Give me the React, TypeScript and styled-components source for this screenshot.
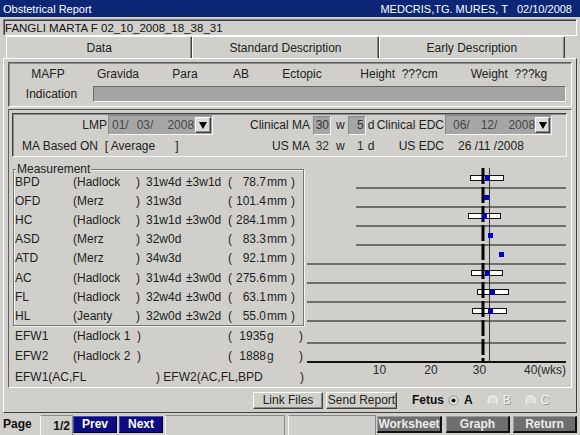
import React from 'react';
import styled, { createGlobalStyle, css } from 'styled-components';

const FACE = '#d0cfcb';

const GlobalStyle = createGlobalStyle`
  html, body {
    margin: 0;
    padding: 0;
    background: ${FACE};
  }
  body {
    font-family: "Liberation Sans", Arial, sans-serif;
    font-size: 12px;
    color: #1c1c1c;
  }
`;

const sunken = css`
  border: 1px solid;
  border-color: #6a6a6a #f4f4f4 #f4f4f4 #6a6a6a;
`;

const raised = css`
  border: 1px solid;
  border-color: #fff #404040 #404040 #fff;
  box-shadow: inset -1px -1px 0 #8a8a8a;
`;

const etched = css`
  border: 1px solid #767676;
  box-shadow: inset 1px 1px 0 #f4f4f4, 1px 1px 0 #f4f4f4;
`;

const Root = styled.div`
  width: 580px;
  height: 435px;
  overflow: hidden;
  display: flex;
  flex-direction: column;
  background: ${FACE};
`;

const TitleBar = styled.div`
  height: 17px;
  flex: none;
  display: flex;
  align-items: center;
  justify-content: space-between;
  padding: 0 8px 0 3px;
  background: #0c2676;
  color: #fff;
  font-size: 11px;
  white-space: pre;
`;

const NameBar = styled.div`
  height: 17px;
  flex: none;
  box-sizing: border-box;
  margin: 2px 3px 0;
  padding-left: 1px;
  display: flex;
  align-items: center;
  border: 1px solid;
  border-color: #808080 #fff #fff #808080;
  box-shadow: inset 1px 1px 0 #404040;
  font-size: 11.5px;
  color: #111;
`;

const TabRow = styled.div`
  height: 22px;
  flex: none;
  display: flex;
  margin: 0 15px 0 6px;
`;

const Tab = styled.div<{ $active?: boolean }>`
  flex: 1;
  box-sizing: border-box;
  display: flex;
  align-items: center;
  justify-content: center;
  padding-top: 1px;
  border-top: 1px solid #fff;
  border-left: 1px solid #fff;
  border-right: 1px solid #404040;
  box-shadow: inset -1px 0 0 #8a8a8a;
  border-radius: 2px 2px 0 0;
  color: #222;
  ${p => p.$active && css`padding-bottom: 1px;`}
`;

const MainPanel = styled.div`
  flex: 1;
  margin: 0 3px;
  box-sizing: border-box;
  display: flex;
  flex-direction: column;
  padding: 3px 4px 0;
  border: 1px solid;
  border-color: #fff #404040 #404040 #fff;
`;

const HeaderBox = styled.div`
  height: 45px;
  flex: none;
  box-sizing: border-box;
  display: flex;
  flex-direction: column;
  border: 1px solid;
  border-color: #5c5c5c #fff #fff #5c5c5c;
  box-shadow: inset 1px 1px 0 #8a8a8a;
`;

const HeaderRow = styled.div<{ $h: number }>`
  height: ${p => p.$h}px;
  display: flex;
  align-items: center;
  padding-left: 1px;
`;

const HeaderCell = styled.span<{ $w: number }>`
  width: ${p => p.$w}px;
  flex: none;
  text-align: center;
  white-space: pre;
  color: #222;
`;

const IndicationInput = styled.div`
  flex: 1;
  height: 16px;
  margin-right: 5px;
  box-sizing: border-box;
  background: #a4a4a4;
  ${sunken};
`;

const DataPanel = styled.div`
  margin-top: 2px;
  height: 279px;
  flex: none;
  box-sizing: border-box;
  display: flex;
  flex-direction: column;
  padding: 3px 4px 0 3px;
  border: 1px solid;
  border-color: #5c5c5c #fff #fff #5c5c5c;
`;

const LmpBox = styled.div`
  height: 44px;
  flex: none;
  box-sizing: border-box;
  display: grid;
  grid-template-columns: 95px 105px 98px 65px 69px 107px 1fr;
  grid-template-rows: 22px 20px;
  align-items: center;
  border: 1px solid;
  border-color: #404040 #f4f4f4 #f4f4f4 #404040;
  box-shadow: inset 1px 1px 0 #8a8a8a;
  white-space: pre;
`;

const RightLabel = styled.span`
  text-align: right;
  padding-right: 1px;
  color: #222;
`;

const DateField = styled.div`
  height: 20px;
  box-sizing: border-box;
  display: flex;
  align-items: center;
  background: #a6a6a6;
  color: #474747;
  border: 1px solid;
  border-color: #8a8a8a #f4f4f4 #f4f4f4 #8a8a8a;
`;

const DateSeg = styled.span<{ $ml: number }>`
  margin-left: ${p => p.$ml}px;
`;

const DropButton = styled.div`
  margin-left: auto;
  margin-right: 1px;
  width: 16px;
  height: 16px;
  box-sizing: border-box;
  display: flex;
  align-items: center;
  justify-content: center;
  background: #dcdcdc;
  ${raised};
`;

const MaCell = styled.div`
  display: flex;
  align-items: center;
  padding-left: 2px;
`;

const MaBox = styled.span<{ $plain?: boolean }>`
  width: 18px;
  height: 19px;
  box-sizing: border-box;
  display: flex;
  align-items: center;
  justify-content: flex-end;
  padding-right: 1px;
  color: #333;
  ${p =>
    p.$plain
      ? css`border: 1px solid transparent;`
      : css`
          background: #a6a6a6;
          border: 1px solid;
          border-color: #8a8a8a #f4f4f4 #f4f4f4 #8a8a8a;
        `}
`;

const Unit = styled.span<{ $ml: number; $mr?: number }>`
  margin-left: ${p => p.$ml}px;
  margin-right: ${p => p.$mr ?? 0}px;
  color: #222;
`;

const BasedOn = styled.span`
  grid-column: span 2;
  padding-left: 9px;
  color: #222;
`;

const PlainDate = styled.span`
  padding-left: 13px;
  color: #222;
`;

const Body = styled.div`
  height: 227px;
  flex: none;
  margin-top: 3px;
  display: flex;
`;

const MeasureCol = styled.div`
  width: 291px;
  flex: none;
  margin-left: 1px;
  display: flex;
  flex-direction: column;
`;

const GroupBox = styled.div`
  position: relative;
  margin-top: 9px;
  height: 157px;
  box-sizing: border-box;
  padding: 2px 0 0 1px;
  ${etched};
`;

const Legend = styled.span`
  position: absolute;
  top: -8px;
  left: 2px;
  padding: 0 1px;
  background: ${FACE};
  line-height: 14px;
  color: #222;
`;

const rowGrid = css`
  display: grid;
  grid-template-columns: 58px 63px 10px 36px 46px 8px 30px 21px 1fr;
  align-items: center;
  white-space: pre;
  color: #1e1e1e;
`;

const MRow = styled.div`
  ${rowGrid};
  height: 19.2px;
`;

const EfwRow = styled.div`
  ${rowGrid};
  height: 20.3px;
  padding-left: 2px;
`;

const FormulaRow = styled.div`
  display: grid;
  grid-template-columns: 141px 1fr auto;
  align-items: center;
  height: 20.3px;
  padding-left: 2px;
  white-space: pre;
  color: #1e1e1e;
`;

const Span3 = styled.span`
  grid-column: span 3;
`;

const Deviation = styled.span`
  padding-left: 4px;
`;

const Num = styled.span`
  text-align: right;
`;

const UnitText = styled.span`
  padding-left: 1px;
`;

const Close = styled.span<{ $ml: number }>`
  padding-left: ${p => p.$ml}px;
`;

const Chart = styled.svg`
  display: block;
  flex: none;
`;

const ButtonRow = styled.div`
  height: 24px;
  flex: none;
  display: flex;
  align-items: center;
  padding-left: 245px;
`;

const PushButton = styled.div<{ $w: number }>`
  width: ${p => p.$w}px;
  height: 17px;
  margin-right: 3px;
  box-sizing: border-box;
  display: flex;
  align-items: center;
  justify-content: center;
  color: #222;
  ${raised};
`;

const Fetus = styled.div`
  margin-left: 12px;
  display: flex;
  align-items: center;
  font-weight: bold;
`;

const FetusLabel = styled.span`
  margin-right: 4px;
  color: #111;
`;

const RadioLabel = styled.span<{ $disabled?: boolean }>`
  margin: 0 14px 0 5px;
  font-weight: bold;
  ${p =>
    p.$disabled
      ? css`
          color: #f4f4f4;
          font-weight: normal;
          text-shadow: 1px 1px 0 #9a9a9a;
        `
      : css`color: #111;`}
`;

const StatusBar = styled.div`
  height: 22px;
  flex: none;
  display: flex;
  align-items: center;
  padding-left: 3px;
`;

const PageLabel = styled.span`
  width: 37px;
  font-weight: bold;
  color: #111;
`;

const StatusField = styled.div<{ $w: number; $ml?: number }>`
  width: ${p => p.$w}px;
  margin-left: ${p => p.$ml ?? 0}px;
  height: 20px;
  align-self: flex-end;
  box-sizing: border-box;
  display: flex;
  align-items: center;
  justify-content: flex-end;
  padding-right: 2px;
  font-weight: bold;
  color: #111;
  border-top: 1px solid #8a8a8a;
  border-left: 1px solid #f4f4f4;
  border-right: 1px solid #8a8a8a;
`;

const NavButton = styled.div<{ $ml?: number }>`
  width: 44px;
  height: 17px;
  margin-left: ${p => p.$ml ?? 0}px;
  box-sizing: border-box;
  display: flex;
  align-items: center;
  justify-content: center;
  background: #0c0c82;
  color: #fff;
  font-weight: bold;
  border: 1px solid;
  border-color: #4a4ab0 #000030 #000030 #4a4ab0;
`;

const GrayButton = styled.div<{ $w: number; $ml: number }>`
  width: ${p => p.$w}px;
  height: 17px;
  margin-left: ${p => p.$ml}px;
  box-sizing: border-box;
  display: flex;
  align-items: center;
  justify-content: center;
  background: #6e6e6e;
  color: #ececec;
  font-weight: bold;
  border-top: 1px solid #9a9a9a;
  border-left: 1px solid #9a9a9a;
  border-right: 2px solid #111;
  border-bottom: 2px solid #111;
`;

const measurements = [
  { name: 'BPD', method: '(Hadlock', age: '31w4d', sd: '±3w1d', value: '78.7' },
  { name: 'OFD', method: '(Merz', age: '31w3d', sd: '', value: '101.4' },
  { name: 'HC', method: '(Hadlock', age: '31w1d', sd: '±3w0d', value: '284.1' },
  { name: 'ASD', method: '(Merz', age: '32w0d', sd: '', value: '83.3' },
  { name: 'ATD', method: '(Merz', age: '34w3d', sd: '', value: '92.1' },
  { name: 'AC', method: '(Hadlock', age: '31w4d', sd: '±3w0d', value: '275.6' },
  { name: 'FL', method: '(Hadlock', age: '32w4d', sd: '±3w0d', value: '63.1' },
  { name: 'HL', method: '(Jeanty', age: '32w0d', sd: '±3w2d', value: '55.0' },
];

// chart points, in chart coordinates
const plots = [
  { y: 18, dot: 183, bar: [166, 199] },
  { y: 37, dot: 182 },
  { y: 56, dot: 180, bar: [164, 196] },
  { y: 75, dot: 186 },
  { y: 94, dot: 197 },
  { y: 113, dot: 183, bar: [167, 198] },
  { y: 132, dot: 188, bar: [173, 204] },
  { y: 151, dot: 186, bar: [168, 202] },
];

const shortLines = [28, 47, 66, 85];
const longLines = [104, 123, 142, 161, 183];

function Triangle() {
  return (
    <svg width="8" height="7" viewBox="0 0 8 7">
      <path d="M0 0 H8 L4 7 Z" fill="#000" />
    </svg>
  );
}

function Radio({ checked, disabled }: { checked?: boolean; disabled?: boolean }) {
  return (
    <svg width="11" height="11" viewBox="0 0 11 11">
      <circle
        cx="5.5"
        cy="5.5"
        r="4.5"
        fill={disabled ? '#dcdcd8' : '#e6e6e6'}
        stroke={disabled ? '#f6f6f6' : '#9a9a9a'}
        strokeWidth="1.2"
      />
      {disabled && <path d="M2.2 8.2 A4.5 4.5 0 0 0 8.8 8.2" fill="none" stroke="#b4b4b4" strokeWidth="1" />}
      {checked && <circle cx="5.5" cy="5.5" r="2" fill="#000" />}
    </svg>
  );
}

function GrowthChart() {
  return (
    <Chart width="262" height="227" viewBox="0 0 262 227">
      {shortLines.map(y => (
        <line key={y} x1="52" x2="262" y1={y} y2={y} stroke="#4e4e4e" strokeWidth="1.4" />
      ))}
      {longLines.map(y => (
        <line key={y} x1="3" x2="262" y1={y} y2={y} stroke="#4e4e4e" strokeWidth="1.4" />
      ))}
      <line x1="3" x2="262" y1="202" y2="202" stroke="#111" strokeWidth="2" />
      {plots.map(p =>
        p.bar ? (
          <rect
            key={p.y}
            x={p.bar[0] + 0.5}
            y={p.y - 2.5}
            width={p.bar[1] - p.bar[0]}
            height="5"
            fill="#fff"
            stroke="#111"
            strokeWidth="1"
          />
        ) : null
      )}
      <line x1="179" x2="179" y1="8" y2="202" stroke="#000" strokeWidth="3" strokeDasharray="16 3" />
      <line x1="185.5" x2="185.5" y1="8" y2="202" stroke="#333" strokeWidth="1" />
      {plots.map(p => (
        <rect key={p.y} x={p.dot - 2} y={p.y - 2} width="5" height="5" fill="#0000c8" />
      ))}
      <g fontFamily='"Liberation Sans", Arial, sans-serif' fontSize="12" fill="#2a2a2a">
        <text x="75.5" y="214" textAnchor="middle">10</text>
        <text x="127" y="214" textAnchor="middle">20</text>
        <text x="175.5" y="214" textAnchor="middle">30</text>
        <text x="220" y="214">40(wks)</text>
      </g>
    </Chart>
  );
}

export default function App() {
  return (
    <Root>
      <GlobalStyle />
      <TitleBar>
        <span>Obstetrical Report</span>
        <span>MEDCRIS,TG. MURES, T   02/10/2008</span>
      </TitleBar>
      <NameBar>FANGLI MARTA F 02_10_2008_18_38_31</NameBar>
      <TabRow>
        <Tab $active>Data</Tab>
        <Tab>Standard Description</Tab>
        <Tab>Early Description</Tab>
      </TabRow>
      <MainPanel>
        <HeaderBox>
          <HeaderRow $h={21}>
            <HeaderCell $w={76}>MAFP</HeaderCell>
            <HeaderCell $w={64}>Gravida</HeaderCell>
            <HeaderCell $w={70}>Para</HeaderCell>
            <HeaderCell $w={42}>AB</HeaderCell>
            <HeaderCell $w={80}>Ectopic</HeaderCell>
            <HeaderCell $w={114}>Height  ???cm</HeaderCell>
            <HeaderCell $w={106}>Weight  ???kg</HeaderCell>
          </HeaderRow>
          <HeaderRow $h={20}>
            <HeaderCell $w={83}>Indication</HeaderCell>
            <IndicationInput />
          </HeaderRow>
        </HeaderBox>
        <DataPanel>
          <LmpBox>
            <RightLabel>LMP</RightLabel>
            <DateField>
              <DateSeg $ml={3}>01/</DateSeg>
              <DateSeg $ml={8}>03/</DateSeg>
              <DateSeg $ml={14}>2008</DateSeg>
              <DropButton>
                <Triangle />
              </DropButton>
            </DateField>
            <RightLabel>Clinical MA</RightLabel>
            <MaCell>
              <MaBox>30</MaBox>
              <Unit $ml={5} $mr={3}>w</Unit>
              <MaBox>5</MaBox>
              <Unit $ml={2}>d</Unit>
            </MaCell>
            <RightLabel>Clinical EDC</RightLabel>
            <DateField>
              <DateSeg $ml={7}>06/</DateSeg>
              <DateSeg $ml={11}>12/</DateSeg>
              <DateSeg $ml={11}>2008</DateSeg>
              <DropButton>
                <Triangle />
              </DropButton>
            </DateField>
            <span />
            <BasedOn>MA Based ON  [ Average      ]</BasedOn>
            <RightLabel>US MA</RightLabel>
            <MaCell>
              <MaBox $plain>32</MaBox>
              <Unit $ml={5} $mr={3}>w</Unit>
              <MaBox $plain>1</MaBox>
              <Unit $ml={2}>d</Unit>
            </MaCell>
            <RightLabel>US EDC</RightLabel>
            <PlainDate>26 /11 /2008</PlainDate>
            <span />
          </LmpBox>
          <Body>
            <MeasureCol>
              <GroupBox>
                <Legend>Measurement</Legend>
                {measurements.map(m => (
                  <MRow key={m.name}>
                    <span>{m.name}</span>
                    <span>{m.method}</span>
                    <span>)</span>
                    <span>{m.age}</span>
                    <Deviation>{m.sd}</Deviation>
                    <span>(</span>
                    <Num>{m.value}</Num>
                    <UnitText>mm</UnitText>
                    <Close $ml={4}>)</Close>
                  </MRow>
                ))}
              </GroupBox>
              <EfwRow>
                <span>EFW1</span>
                <Span3>(Hadlock 1  )</Span3>
                <span />
                <span>(</span>
                <Num>1935</Num>
                <UnitText>g</UnitText>
                <Close $ml={12}>)</Close>
              </EfwRow>
              <EfwRow>
                <span>EFW2</span>
                <Span3>(Hadlock 2  )</Span3>
                <span />
                <span>(</span>
                <Num>1888</Num>
                <UnitText>g</UnitText>
                <Close $ml={12}>)</Close>
              </EfwRow>
              <FormulaRow>
                <span>EFW1(AC,FL</span>
                <span>) EFW2(AC,FL,BPD</span>
                <span>)</span>
              </FormulaRow>
            </MeasureCol>
            <GrowthChart />
          </Body>
        </DataPanel>
        <ButtonRow>
          <PushButton $w={70}>Link Files</PushButton>
          <PushButton $w={71}>Send Report</PushButton>
          <Fetus>
            <FetusLabel>Fetus</FetusLabel>
            <Radio checked />
            <RadioLabel>A</RadioLabel>
            <Radio disabled />
            <RadioLabel $disabled>B</RadioLabel>
            <Radio disabled />
            <RadioLabel $disabled>C</RadioLabel>
          </Fetus>
        </ButtonRow>
      </MainPanel>
      <StatusBar>
        <PageLabel>Page</PageLabel>
        <StatusField $w={33}>1/2</StatusField>
        <NavButton>Prev</NavButton>
        <NavButton $ml={2}>Next</NavButton>
        <StatusField $w={120} $ml={2} />
        <StatusField $w={88} $ml={3} />
        <GrayButton $w={65} $ml={1}>Worksheet</GrayButton>
        <GrayButton $w={64} $ml={4}>Graph</GrayButton>
        <GrayButton $w={64} $ml={3}>Return</GrayButton>
      </StatusBar>
    </Root>
  );
}
